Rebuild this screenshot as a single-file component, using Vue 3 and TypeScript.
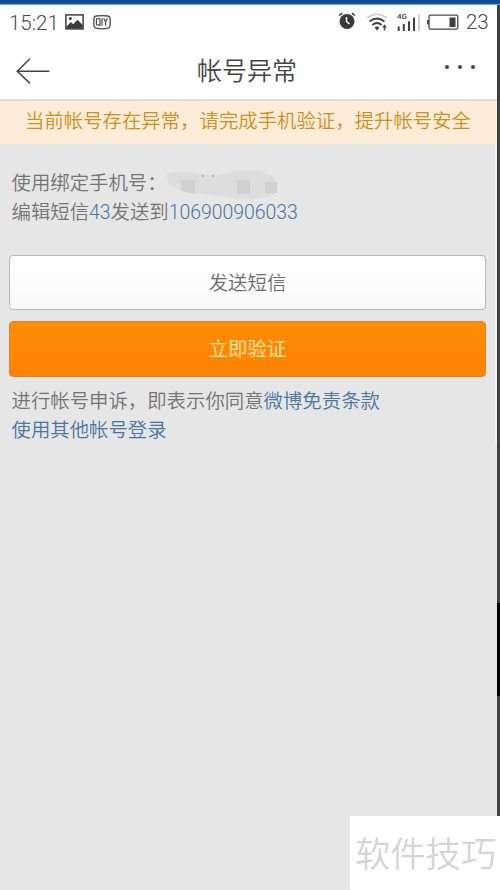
<script setup lang="ts">
const notice: string = '当前帐号存在异常，请完成手机验证，提升帐号安全'
const smsCode: string = '43'
const smsTarget: string = '106900906033'
</script>

<template>
  <div class="frame">
    <div class="top-edge"></div>
    <div class="body">
      <main class="screen">
        <div class="status">
          <span class="time">15:21</span>
          <svg class="picture" width="19" height="16" viewBox="0 0 19 16">
            <rect x="0.9" y="0.9" width="17.2" height="14" fill="none" stroke="#3c3c3c" stroke-width="1.5" />
            <path d="M1.5 12.5 L6 8 L8.2 10.2 L12.6 5.8 L17.5 11 V14.5 H1.5Z" fill="#3c3c3c" />
            <circle cx="5.3" cy="4.6" r="1.5" fill="#3c3c3c" />
          </svg>
          <svg class="qiy" width="18" height="15" viewBox="0 0 18 15">
            <path d="M3 1 Q9 0.3 15 1 Q16.8 1.2 17 3 Q17.4 7 17 11 Q16.8 12.8 15 13.2 Q9 14.4 3 13.2 Q1.2 12.8 1 11 Q0.6 7 1 3 Q1.2 1.2 3 1Z" fill="none" stroke="#4a4a4a" stroke-width="1.3" />
            <g fill="none" stroke="#4a4a4a" stroke-width="1.2">
              <rect x="3.4" y="3.6" width="3.6" height="6.4" rx="1" />
              <path d="M5.7 9.5 L7.3 11.2 M9 3.2 V10.8 M10.7 3.2 L12.6 7 L14.5 3.2 M12.6 7 V10.8" />
            </g>
          </svg>
          <span class="spacer"></span>
          <svg class="alarm" width="18" height="18" viewBox="0 0 18 18">
            <circle cx="9" cy="9.4" r="7.5" fill="#3a3a3a" />
            <path d="M1.2 3.5 L4 1.2 M14 1.2 L16.8 3.5" stroke="#3a3a3a" stroke-width="1.6" />
            <path d="M8.5 5 V9.5 L11.5 12" fill="none" stroke="#fff" stroke-width="1.5" />
          </svg>
          <svg class="wifi" width="23" height="19" viewBox="0 0 23 19">
            <g fill="none" stroke-width="1.7">
              <path d="M1 5 Q11 -2.5 21 5" stroke="#cfcfcf" />
              <path d="M3.5 8.5 Q11 2.5 18.5 8.5 M6.3 12 Q11 8 15.7 12" stroke="#404040" />
            </g>
            <path d="M8.5 14.5 Q11 12.5 13.5 14.5 L11 17.5Z M16 14.5 L18.5 11.5 L21 14.5 H19.2 V17.5 H17.8 V14.5Z" fill="#404040" />
          </svg>
          <svg class="signal" width="24" height="19" viewBox="0 0 24 19">
            <text x="0" y="6" font-family="Roboto, sans-serif" font-size="8" font-weight="500" fill="#444">4G</text>
            <path d="M1.7 13.5 V18 M6.8 11 V18 M12 8.2 V18 M17 4.5 V18" stroke="#404040" stroke-width="2" />
            <path d="M22 1.5 V18" stroke="#d4d4d4" stroke-width="2" />
          </svg>
          <svg class="battery" width="32" height="17" viewBox="0 0 32 17">
            <rect x="2" y="1.2" width="28.8" height="14" rx="1.4" fill="none" stroke="#4a4a4a" stroke-width="1.3" />
            <rect x="0" y="6" width="2" height="4.4" fill="#4a4a4a" />
            <rect x="22.5" y="3.5" width="6" height="9.5" fill="#404040" />
          </svg>
          <span class="level">23</span>
        </div>

        <header class="nav">
          <svg class="back" width="34" height="26" viewBox="0 0 34 26">
            <path d="M14 0.8 L1.2 13.2 L14 25.4 M1.2 13.2 H33.4" fill="none" stroke="#454545" stroke-width="1.5" />
          </svg>
          <h1>帐号异常</h1>
          <div class="more"><i></i><i></i><i></i></div>
        </header>

        <p class="notice">{{ notice }}</p>

        <section class="content">
          <div class="copy">
            <p class="phone">
              <span>使用绑定手机号：</span>
              <svg class="mask" width="114" height="33" viewBox="0 0 114 33">
                <path d="M1 4 Q18 1 34 5 Q50 7 62 4 Q75 -1 94 2 Q110 7 112 16 Q112 27 98 28 Q85 32 65 28 L35 25 Q12 22 2 15Z" fill="#dddddd" />
                <path d="M15 11 H29 V25 L15 22Z M71 11 H84 V25 H71Z M99 13 H111 V24 H99Z" fill="#d1d1d1" />
                <path d="M36 7 h2 M46 7 h2" stroke="#aaa" stroke-width="1.5" />
              </svg>
            </p>
            <p>编辑短信<a>{{ smsCode }}</a>发送到<a>{{ smsTarget }}</a></p>
          </div>
          <button class="btn plain" type="button">发送短信</button>
          <button class="btn primary" type="button">立即验证</button>
          <div class="copy legal">
            <p>进行帐号申诉，即表示你同意<a>微博免责条款</a></p>
            <p><a>使用其他帐号登录</a></p>
          </div>
        </section>
      </main>
      <aside class="side"><div class="side-dark"></div></aside>
    </div>
    <div class="watermark">软件技巧</div>
  </div>
</template>

<style>
body {
  margin: 0;
}
</style>

<style scoped>
.frame {
  position: relative;
  display: flex;
  flex-direction: column;
  width: 500px;
  height: 890px;
  overflow: hidden;
  font-family: Roboto, "Noto Sans CJK SC", sans-serif;
  color: #747474;
}
p,
h1 {
  margin: 0;
  font-weight: 350;
}
svg {
  display: block;
  flex: none;
}
.top-edge {
  flex: none;
  height: 5px;
  background: linear-gradient(#0b4d94 0 3px, #2c69a8 4px, #b9cfe4);
}
.body {
  flex: 1;
  display: flex;
}
.screen {
  box-sizing: border-box;
  width: 497px;
  background: #e6e6e6;
}
.side {
  box-sizing: border-box;
  width: 3px;
  padding-top: 598px;
  background: #404040;
}
.side-dark {
  height: 93px;
  background: #000;
}
.status {
  display: flex;
  align-items: flex-start;
  height: 37px;
  padding-left: 9px;
  background: #fff;
  color: #4a4a4a;
}
.time,
.level {
  font-size: 20.5px;
  font-weight: 300;
  line-height: 24px;
  padding-top: 6px;
}
.time {
  width: 46px;
}
.picture {
  margin: 9px 0 0 10px;
}
.qiy {
  margin: 10px 0 0 9px;
}
.spacer {
  flex: 1;
}
.alarm {
  margin: 7px 10px 0 0;
}
.wifi {
  margin: 8px 8px 0 0;
}
.signal {
  margin: 8px 6px 0 0;
}
.battery {
  margin: 9px 7px 0 0;
}
.level {
  width: 31px;
  padding-top: 5px;
}
.nav {
  display: flex;
  align-items: center;
  box-sizing: border-box;
  height: 59px;
  padding: 0 22px 2px 16px;
  background: #fff;
  border-bottom: 2px solid #e4ddd2;
}
.back {
  margin-top: 2px;
}
.nav h1 {
  flex: 1;
  padding: 5px 1px 0 0;
  font-size: 25px;
  line-height: 36px;
  text-align: center;
  color: #444;
}
.more {
  display: flex;
  gap: 9px;
  padding-bottom: 5px;
}
.more i {
  width: 4px;
  height: 4px;
  border-radius: 50%;
  background: #444;
}
.notice {
  box-sizing: border-box;
  height: 43px;
  padding: 1px 1px 0 0;
  background: #fcecd8;
  color: #c99220;
  font-size: 19.4px;
  line-height: 40px;
  text-align: center;
  white-space: nowrap;
}
.content {
  padding: 25px 9px 0;
  border-right: 2px solid #efefef;
}
.copy {
  padding-left: 2.5px;
  font-size: 19.4px;
  line-height: 29px;
  white-space: nowrap;
}
.copy a {
  color: #4a769f;
}
.phone {
  display: flex;
  height: 29px;
}
.mask {
  margin: 0 0 0 -1px;
}
.btn {
  display: block;
  box-sizing: border-box;
  width: 477px;
  height: 56px;
  padding: 0;
  border-radius: 4px;
  font-family: inherit;
  font-size: 19.4px;
  font-weight: 350;
  line-height: 53px;
  text-align: center;
}
.plain {
  margin-top: 28px;
  height: 55px;
  padding-top: 1px;
  border: 1px solid #b9b9bb;
  background: linear-gradient(#fff, #f9f9f9);
  color: #6c6c6c;
}
.primary {
  margin-top: 11px;
  border: 1px solid #d98424;
  background: linear-gradient(#ff8d0b, #ff8200);
  color: #ffedaa;
}
.legal {
  padding-top: 10px;
}
.watermark {
  position: absolute;
  right: 0;
  bottom: 0;
  width: 150px;
  height: 74px;
  box-sizing: border-box;
  padding: 2px 0 0 5px;
  background: #fff;
  color: #d5d5d5;
  font-size: 35.3px;
  font-weight: 350;
  line-height: 74px;
  white-space: nowrap;
}
</style>
